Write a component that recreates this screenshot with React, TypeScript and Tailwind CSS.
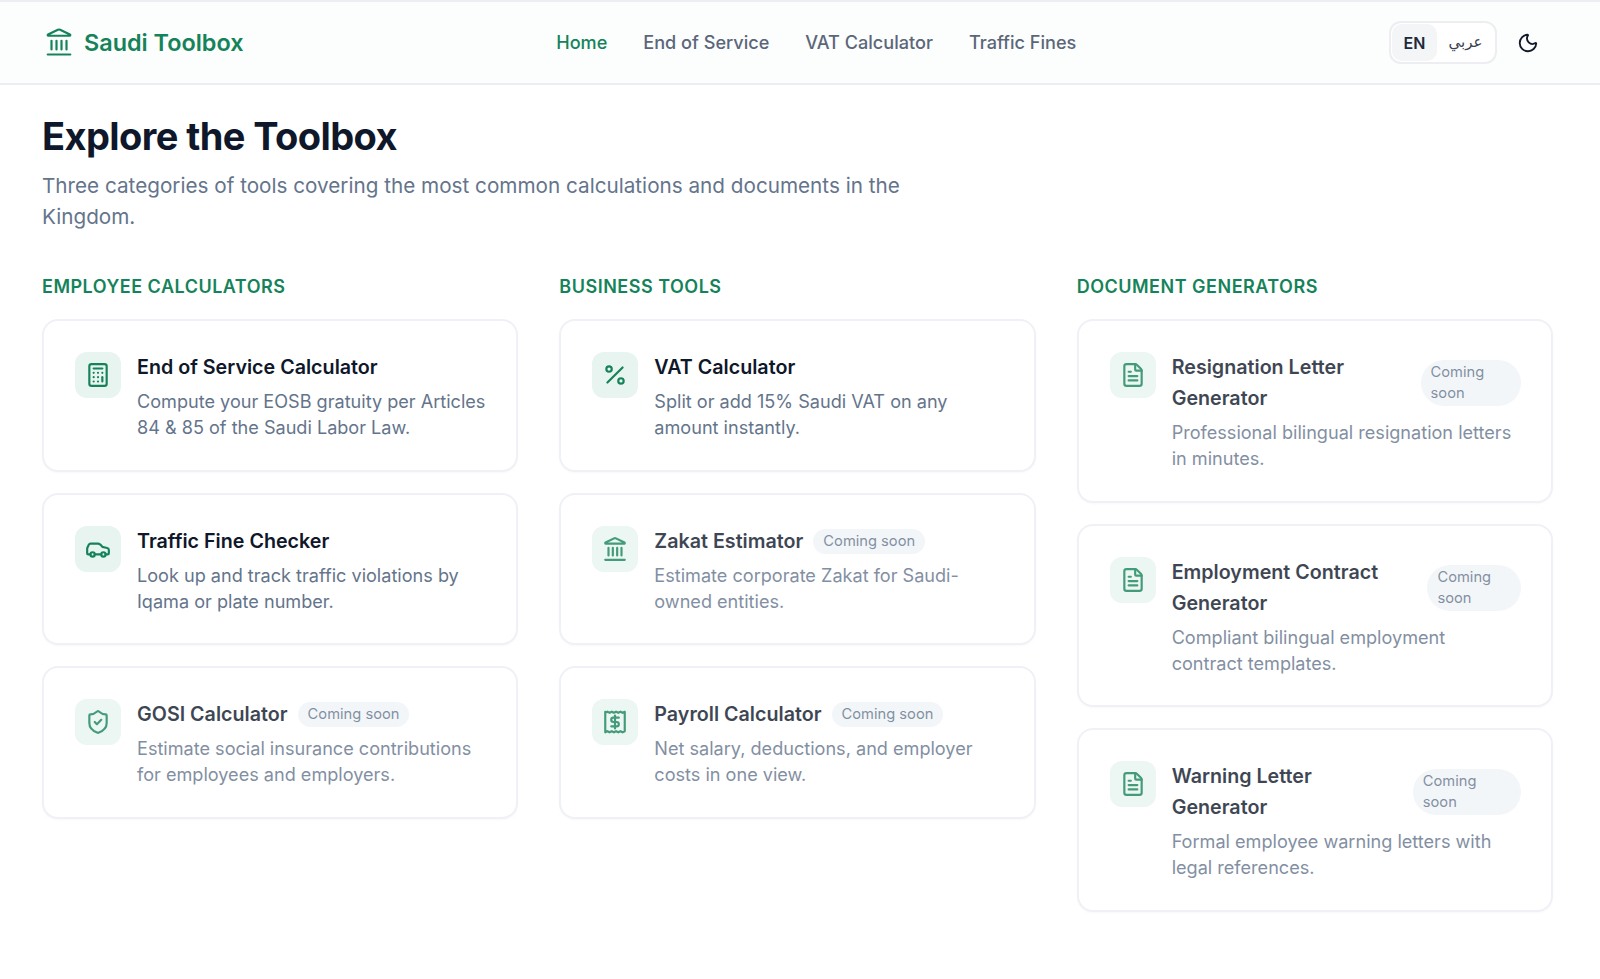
import { Calculator, Car, FileText, Landmark, Moon, Percent, ShieldCheck } from "lucide-react";
import type { ReactNode } from "react";

type Tool = {
  title: string;
  desc: string;
  icon: ReactNode;
  soon?: boolean;
};

const iconClass = "h-[26px] w-[26px] text-[#15835a]";

// square bill with a jagged top and bottom edge and a dollar sign
function PayrollIcon() {
  return (
    <svg viewBox="0 0 24 24" fill="none" stroke="currentColor" strokeWidth="2" strokeLinecap="round" strokeLinejoin="round" className={iconClass}>
      <path d="M3 2.5v19l2-1 2 1 2-1 2 1 2-1 2 1 2-1 2 1 2-1V2.5l-2 1-2-1-2 1-2-1-2 1-2-1-2 1-2-1-2 1z" />
      <path d="M15.5 8h-5a2 2 0 0 0 0 4h3a2 2 0 0 1 0 4h-5" />
      <path d="M12 6v12" />
    </svg>
  );
}

const columns: { heading: string; tools: Tool[] }[] = [
  {
    heading: "Employee Calculators",
    tools: [
      {
        title: "End of Service Calculator",
        desc: "Compute your EOSB gratuity per Articles 84 & 85 of the Saudi Labor Law.",
        icon: <Calculator className={iconClass} />,
      },
      {
        title: "Traffic Fine Checker",
        desc: "Look up and track traffic violations by Iqama or plate number.",
        icon: <Car className={iconClass} />,
      },
      {
        title: "GOSI Calculator",
        desc: "Estimate social insurance contributions for employees and employers.",
        icon: <ShieldCheck className={iconClass} />,
        soon: true,
      },
    ],
  },
  {
    heading: "Business Tools",
    tools: [
      {
        title: "VAT Calculator",
        desc: "Split or add 15% Saudi VAT on any amount instantly.",
        icon: <Percent className={iconClass} />,
      },
      {
        title: "Zakat Estimator",
        desc: "Estimate corporate Zakat for Saudi-owned entities.",
        icon: <Landmark className={iconClass} />,
        soon: true,
      },
      {
        title: "Payroll Calculator",
        desc: "Net salary, deductions, and employer costs in one view.",
        icon: <PayrollIcon />,
        soon: true,
      },
    ],
  },
  {
    heading: "Document Generators",
    tools: [
      {
        title: "Resignation Letter Generator",
        desc: "Professional bilingual resignation letters in minutes.",
        icon: <FileText className={iconClass} />,
        soon: true,
      },
      {
        title: "Employment Contract Generator",
        desc: "Compliant bilingual employment contract\u00a0templates.",
        icon: <FileText className={iconClass} />,
        soon: true,
      },
      {
        title: "Warning Letter Generator",
        desc: "Formal employee warning letters with legal references.",
        icon: <FileText className={iconClass} />,
        soon: true,
      },
    ],
  },
];

function ToolCard({ tool }: { tool: Tool }) {
  return (
    <div className="rounded-2xl border-2 border-[#eff1f6] bg-white pt-[31px] pr-[30px] pb-[29.5px] pl-[31px] shadow-[0_1px_2px_rgba(0,0,0,0.03)]">
      <div className={tool.soon ? "flex gap-4 opacity-80" : "flex gap-4"}>
        <div className="flex h-[46px] w-[46px] shrink-0 items-center justify-center rounded-xl bg-[#e8f4ef]">
          {tool.icon}
        </div>
        <div className="min-w-0 flex-1">
          <div className="flex items-center gap-[10px]">
            <h3 className="text-[19.7px] leading-[31px] font-semibold text-[#0f172a]">{tool.title}</h3>
            {tool.soon && (
              <span className="rounded-full bg-[#f1f4f8] px-[10px] py-[2px] text-[14.7px] leading-[21px] font-normal text-[#64748b]">
                Coming soon
              </span>
            )}
          </div>
          <p className="mt-[5px] text-[18.1px] leading-[26px] text-[#64748b]">{tool.desc}</p>
        </div>
      </div>
    </div>
  );
}

export default function App() {
  return (
    <div className="min-h-[979px] bg-white font-['Inter',sans-serif]">
      <header className="flex h-[85px] items-center justify-between border-t-2 border-b-2 border-[#eceef1] bg-[#fcfdfd] pr-[61px] pl-[44px]">
        <div className="flex items-center gap-[10px]">
          <Landmark className="h-[30px] w-[30px] text-[#15835a]" strokeWidth={1.75} />
          <span className="text-[23.4px] font-semibold text-[#15835a]">Saudi Toolbox</span>
        </div>
        <nav className="flex items-center gap-9 text-[18.1px] font-medium text-[#5b6779]">
          <span className="text-[#15835a]">Home</span>
          <span>End of Service</span>
          <span>VAT Calculator</span>
          <span>Traffic Fines</span>
        </nav>
        <div className="flex items-center justify-end gap-[20px]">
          <div className="flex h-[43px] w-[108px] items-center rounded-xl border-2 border-[#eceef2] bg-white p-[1px]">
            <span className="flex h-full w-[45px] items-center justify-center rounded-[10px] bg-[#f3f5f6] text-[16px] font-semibold text-[#1e293b]">
              EN
            </span>
            <span className="flex-1 text-center font-['DejaVu_Sans',sans-serif] text-[15px] text-[#374151]">عربي</span>
          </div>
          <Moon className="h-[22px] w-[22px] text-[#111827]" />
        </div>
      </header>
      <main className="pt-[26px] pr-[47px] pl-[42px]">
        <h1 className="text-[38px] leading-[50px] font-bold tracking-[-0.58px] text-[#0f172a]">Explore the Toolbox</h1>
        <p className="mt-[10px] max-w-[900px] text-[20.7px] leading-[30.5px] text-[#64748b]">
          Three categories of tools covering the most common calculations and documents in the Kingdom.
        </p>
        <div className="mt-[40.5px] grid grid-cols-3 gap-x-[41px]">
          {columns.map((col) => (
            <section key={col.heading}>
              <h2 className="text-[18px] leading-[28px] font-semibold tracking-[0.5px] text-[#15835a] uppercase">{col.heading}</h2>
              <div className="mt-[18.5px] flex flex-col gap-[21px]">
                {col.tools.map((tool) => (
                  <ToolCard key={tool.title} tool={tool} />
                ))}
              </div>
            </section>
          ))}
        </div>
      </main>
    </div>
  );
}
